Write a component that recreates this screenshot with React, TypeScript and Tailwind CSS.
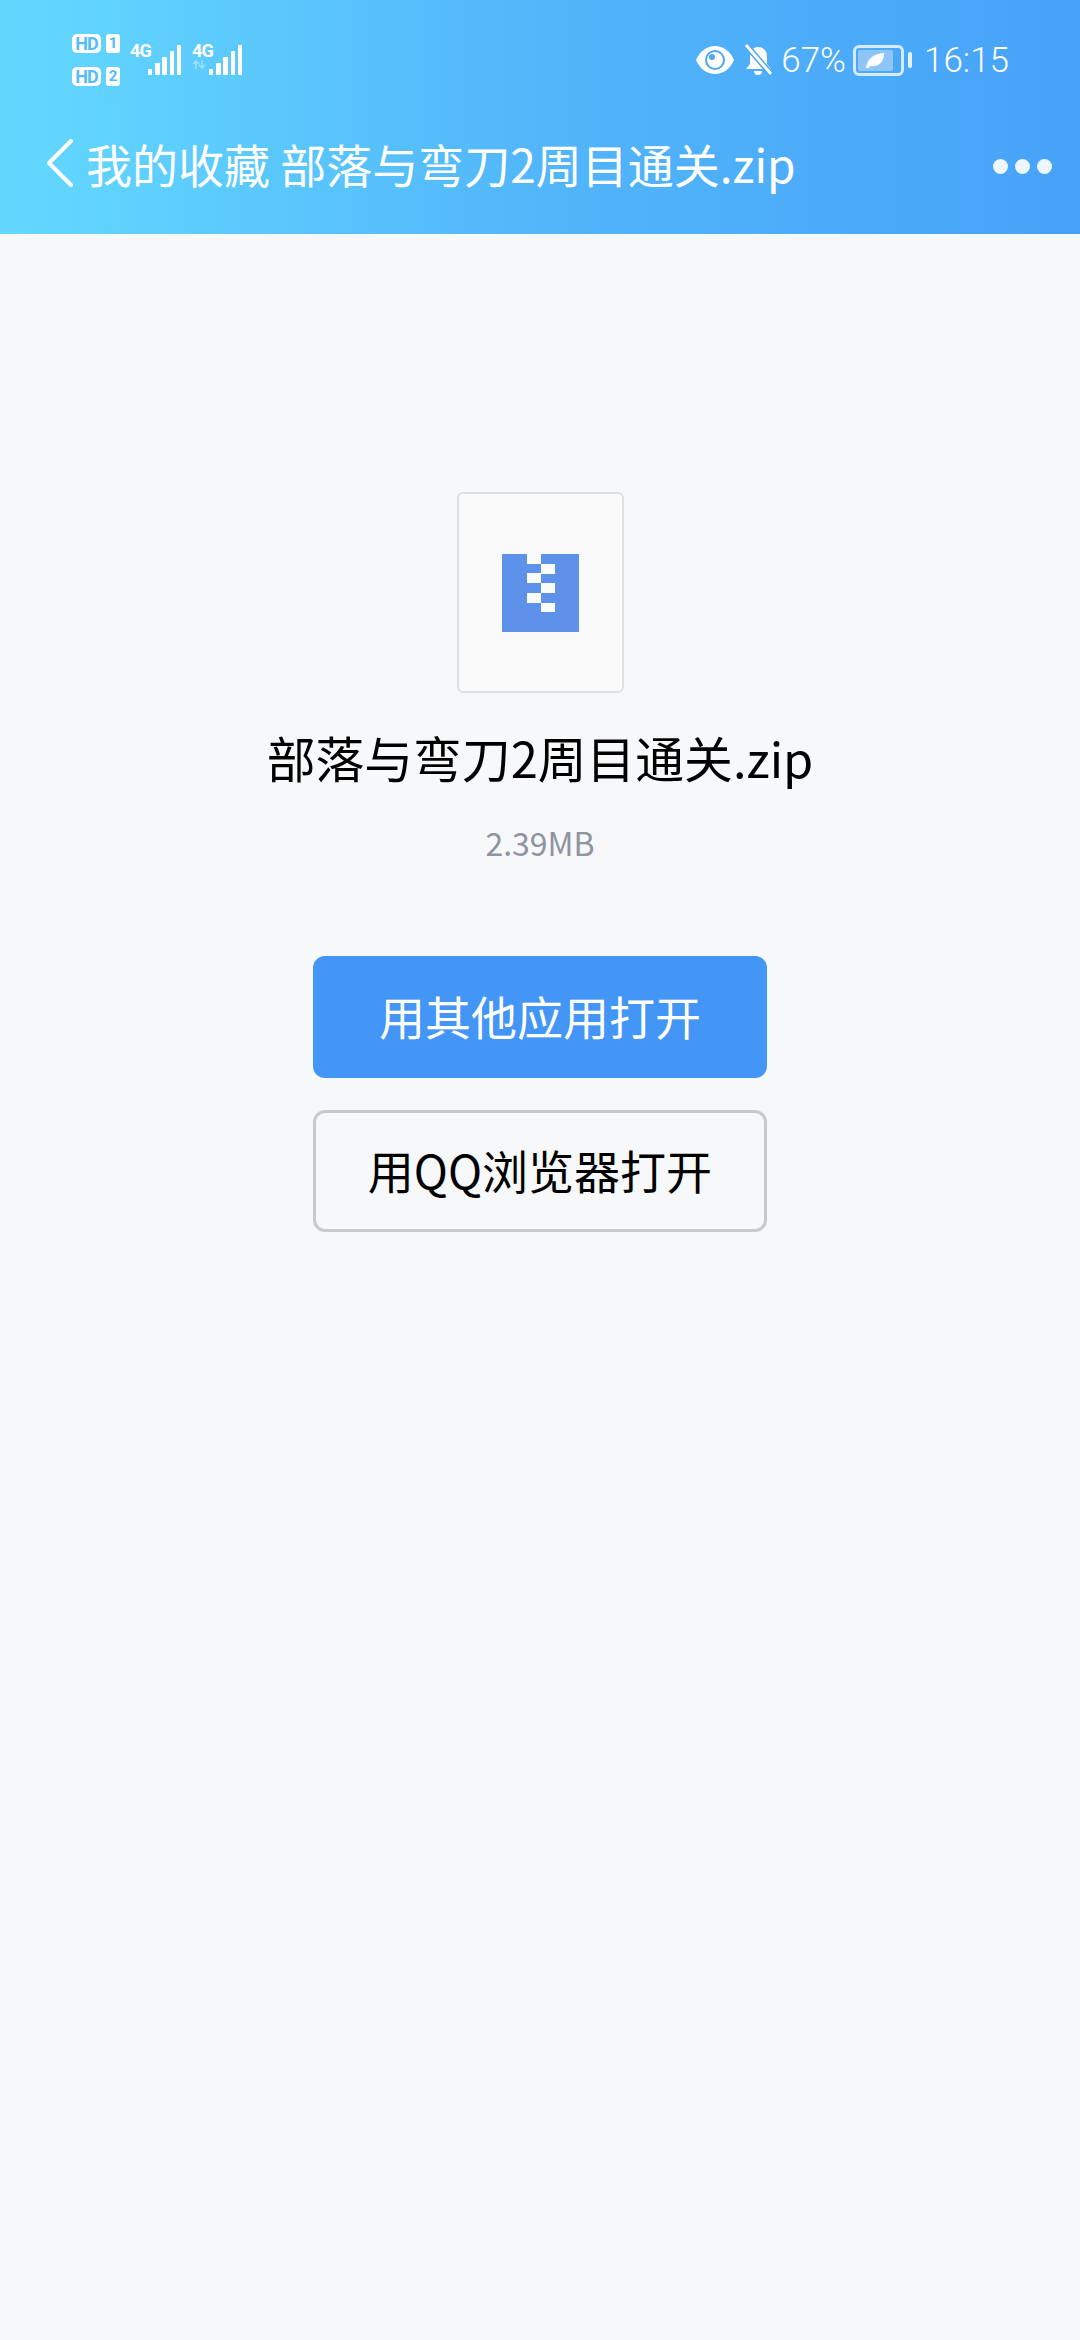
const FONT = 'font-["Noto_Sans_CJK_SC","Noto_Sans",sans-serif]'

function SimRow({ n }: { n: string }) {
  return (
    <div className="flex items-center gap-[5px]">
      <span className="flex h-[19px] w-[29px] items-center justify-center rounded-[5px] bg-white font-['Roboto',sans-serif] text-[18px] leading-none font-bold tracking-tighter text-[#58bcf9]">
        HD
      </span>
      <span className="flex h-[19px] w-[14px] items-center justify-center rounded-[3px] bg-white font-['Roboto',sans-serif] text-[15px] leading-none font-bold text-[#58bcf9]">
        {n}
      </span>
    </div>
  )
}

function Signal() {
  return (
    <svg width="33" height="31" viewBox="0 0 33 31" fill="#fff">
      <rect x="0" y="24" width="4" height="6" rx="1" />
      <rect x="7" y="18" width="5" height="12" rx="1" />
      <rect x="14" y="12" width="5" height="18" rx="1" />
      <rect x="22" y="6" width="4" height="24" rx="1" />
      <rect x="29" y="0" width="4" height="30" rx="1" />
    </svg>
  )
}

function DataArrows() {
  return (
    <svg width="14" height="9" viewBox="0 0 14 9" className="absolute top-[18px] left-0 opacity-40">
      <path d="M4 9V1M1 4l3-3 3 3M10 0v8M7 5l3 3 3-3" fill="none" stroke="#fff" strokeWidth="1.6" />
    </svg>
  )
}

function EyeIcon() {
  return (
    <svg width="38" height="28" viewBox="0 0 38 28">
      <path d="M0 14C4 5 11 0 19 0s15 5 19 14c-4 9-11 14-19 14S4 23 0 14z" fill="#fff" />
      <circle cx="19" cy="14" r="10" fill="#4aa6f9" />
      <circle cx="19" cy="14" r="8" fill="#fff" />
      <circle cx="16" cy="11" r="3" fill="#4aa6f9" />
    </svg>
  )
}

function BellOffIcon() {
  return (
    <svg width="29" height="32" viewBox="0 0 29 32">
      <path d="M14 3c6 0 9 4 9 10v7l4 5H2l4-5v-7c0-6 3-10 8-10z" fill="#fff" />
      <path d="M10 27h8a4 4 0 0 1-8 0z" fill="#fff" />
      <path d="M2 1l25 29" stroke="#4aa6f9" strokeWidth="6" />
      <path d="M2 1l25 29" stroke="#fff" strokeWidth="3" />
    </svg>
  )
}

function BatteryIcon() {
  return (
    <div className="flex items-center gap-[4px]">
      <div className="flex h-[31px] w-[51px] items-center rounded-[6px] border-[3px] border-[#d5ebfe] p-[2px]">
        <div className="flex h-full w-[35px] items-center justify-center rounded-[2px] bg-[#8fc5f8]">
          <svg width="20" height="17" viewBox="0 0 20 17">
            <path d="M1 16C2 7 8 2 19 1c0 9-5 14-14 13 2-4 5-6 8-8-4 2-7 5-9 10H1z" fill="#fff" />
          </svg>
        </div>
      </div>
      <div className="h-[16px] w-[4px] rounded-[2px] bg-[#e6f3fe]" />
    </div>
  )
}

function BackIcon() {
  return (
    <svg width="27" height="48" viewBox="0 0 27 48" fill="none" className="shrink-0">
      <path d="M25 2L3 24l22 22" stroke="#fff" strokeWidth="4" strokeLinecap="round" strokeLinejoin="round" />
    </svg>
  )
}

function ZipIcon() {
  return (
    <svg width="77" height="78" viewBox="0 0 77 78">
      <rect width="77" height="78" fill="#5e92ea" />
      <g fill="#fafbfc">
        <rect x="25" y="0" width="14" height="10" />
        <rect x="39" y="10" width="14" height="10" />
        <rect x="25" y="19" width="14" height="10" />
        <rect x="39" y="29" width="14" height="10" />
        <rect x="25" y="39" width="14" height="10" />
        <rect x="39" y="49" width="14" height="9" />
      </g>
    </svg>
  )
}

export default function App() {
  return (
    <div className={`flex h-[2340px] w-[1080px] flex-col overflow-hidden bg-[#f7f8fa] ${FONT}`}>
      <header className="flex h-[234px] flex-col bg-linear-to-r from-[#64d9ff] via-[#52b6fa] to-[#47a2f8] text-white">
        <div className="flex h-[120px] items-center justify-between pr-[71px] pl-[72px]">
          <div className="flex items-center gap-[10px]">
            <div className="flex flex-col gap-[14px]">
              <SimRow n="1" />
              <SimRow n="2" />
            </div>
            <div className="flex items-start font-['Roboto',sans-serif] text-[18px] leading-none font-bold tracking-tighter">
              <span className="mt-[-3px] w-[18px]">4G</span>
              <Signal />
              <span className="relative mt-[-3px] ml-[11px] w-[17px]">
                4G
                <DataArrows />
              </span>
              <Signal />
            </div>
          </div>
          <div className="flex items-center font-['Roboto',sans-serif] text-[35px] leading-none font-light">
            <EyeIcon />
            <span className="ml-[10px] flex">
              <BellOffIcon />
            </span>
            <span className="ml-[8px]">67%</span>
            <span className="ml-[7px] flex">
              <BatteryIcon />
            </span>
            <span className="ml-[12px]">16:15</span>
          </div>
        </div>
        <nav className="flex h-[114px] items-start justify-between pr-[28px] pl-[46px]">
          <div className="mt-[10px] flex items-center">
            <BackIcon />
            <span className="ml-[13px] text-[46px] leading-[66px] font-normal whitespace-pre">我的收藏 部落与弯刀2周目通关.zip</span>
          </div>
          <div className="mt-[39px] flex gap-[7px]">
            <span className="size-[15px] rounded-full bg-[#eef6fe]" />
            <span className="size-[15px] rounded-full bg-[#eef6fe]" />
            <span className="size-[15px] rounded-full bg-[#eef6fe]" />
          </div>
        </nav>
      </header>

      <main className="flex flex-col items-center">
        <div className="mt-[258px] flex h-[201px] w-[167px] items-center justify-center rounded-[6px] border-2 border-[#dfe0e4] bg-[#fafafb]">
          <ZipIcon />
        </div>
        <h1 className="mt-[29px] text-[48.8px] leading-[70px] font-normal text-black">部落与弯刀2周目通关.zip</h1>
        <p className="mt-[28px] text-[32px] leading-[44px] text-[#8f94a1]">2.39MB</p>
        <button className="mt-[92px] flex h-[122px] w-[454px] items-center justify-center rounded-[12px] bg-[#4496f6] pb-[3px] text-[46px] text-white">
          用其他应用打开
        </button>
        <button className="mt-[32px] flex h-[122px] w-[454px] items-center justify-center rounded-[12px] border-[3px] border-[#c9cacd] pb-[3px] text-[46px] text-black">
          用QQ浏览器打开
        </button>
      </main>
    </div>
  )
}
